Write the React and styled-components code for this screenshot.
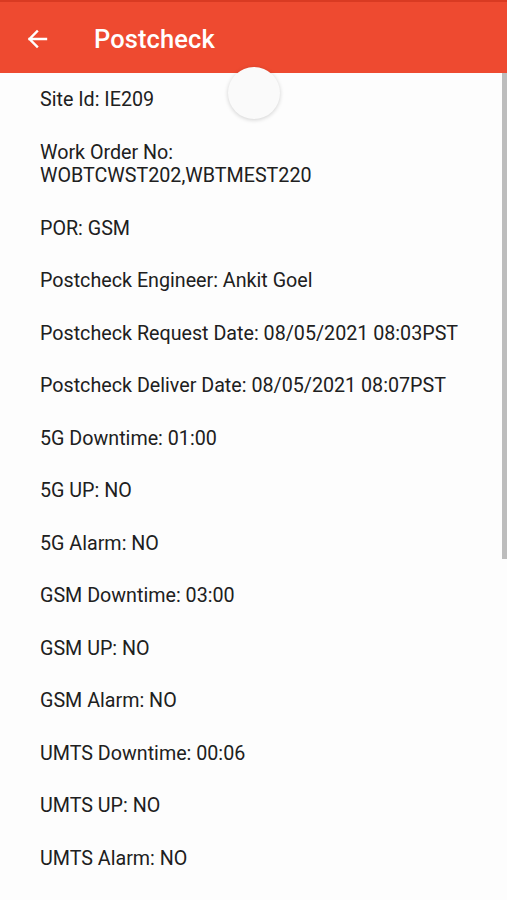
import React from "react";
import styled, { createGlobalStyle } from "styled-components";

const GlobalStyle = createGlobalStyle`
  html, body {
    margin: 0;
    padding: 0;
    background: #fdfdfd;
    font-family: Roboto, "Noto Sans", sans-serif;
  }
`;

const Screen = styled.div`
  position: relative;
  width: 507px;
  height: 900px;
  overflow: hidden;
  background: #fdfdfd;
`;

const AppBar = styled.header`
  height: 73px;
  box-sizing: border-box;
  display: flex;
  align-items: center;
  background: #ee4a30;
  border-top: 2px solid #d93a22;
  color: #fff;
  padding: 2px 0 0 24px;
`;

const BackButton = styled.button`
  display: flex;
  align-items: center;
  justify-content: center;
  width: 26px;
  height: 26px;
  padding: 0;
  margin-right: 44px;
  background: none;
  border: 0;
  color: #fff;
`;

const Title = styled.h1`
  margin: 0;
  font-size: 25.5px;
  font-weight: 500;
  letter-spacing: 0.1px;
`;

const Body = styled.div`
  display: flex;
  padding-right: 5px;
`;

const List = styled.div`
  flex: 1;
  display: flex;
  flex-direction: column;
  gap: 29px;
  padding: 15px 0 0 40px;
`;

const Field = styled.div`
  font-size: 19.7px;
  line-height: 23.5px;
  color: #202020;
`;

const Scrollbar = styled.div`
  position: absolute;
  right: 0;
  top: 73px;
  width: 5px;
  height: 486px;
  background: #bdbdbd;
`;

const Spinner = styled.div`
  position: absolute;
  left: 228px;
  top: 67px;
  width: 52px;
  height: 52px;
  border-radius: 50%;
  background: #fafafa;
  box-shadow: 0 1px 4px rgba(0, 0, 0, 0.18);
`;

const fields = [
  "Site Id: IE209",
  ["Work Order No:", "WOBTCWST202,WBTMEST220"],
  "POR: GSM",
  "Postcheck Engineer: Ankit Goel",
  "Postcheck Request Date: 08/05/2021 08:03PST",
  "Postcheck Deliver Date: 08/05/2021 08:07PST",
  "5G Downtime: 01:00",
  "5G UP: NO",
  "5G Alarm: NO",
  "GSM Downtime: 03:00",
  "GSM UP: NO",
  "GSM Alarm: NO",
  "UMTS Downtime: 00:06",
  "UMTS UP: NO",
  "UMTS Alarm: NO",
];

const App = () => (
  <Screen>
    <GlobalStyle />
    <AppBar>
      <BackButton aria-label="Back">
        <svg width="24" height="24" viewBox="0 0 24 24" fill="none" stroke="currentColor" strokeWidth="2.4" strokeLinecap="square">
          <path d="M21 12H4.5M12 4.5 4.5 12l7.5 7.5" />
        </svg>
      </BackButton>
      <Title>Postcheck</Title>
    </AppBar>
    <Body>
      <List>
        {fields.map((f, i) =>
          Array.isArray(f) ? (
            <Field key={i}>
              {f[0]}
              <br />
              {f[1]}
            </Field>
          ) : (
            <Field key={i}>{f}</Field>
          )
        )}
      </List>
    </Body>
    <Scrollbar />
    <Spinner />
  </Screen>
);

export default App;
